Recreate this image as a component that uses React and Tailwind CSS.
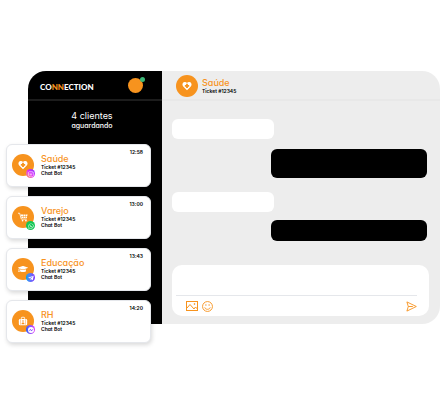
import React from "react";
import clsx from "clsx";
import {
  FaGraduationCap,
  FaInstagram,
  FaTelegramPlane,
  FaWhatsapp,
} from "react-icons/fa";

const HeartIcon = ({ className }) => (
  <svg viewBox="0 0 24 24" className={className}>
    <path
      d="M12 22 3 13.200C-.6 9.400 1 3 6.400 2.400 8.800 2.200 10.800 3.200 12 5c1.200-1.800 3.200-2.800 5.600-2.600C23 3 24.600 9.400 21 13.200L12 22Z"
      fill="currentColor"
    />
    <path
      d="M9.800 6.500h4.400v3h3v4.400h-3v3H9.800v-3h-3V9.500h3z"
      fill="#f7931e"
    />
  </svg>
);

const CartIcon = ({ className }) => (
  <svg viewBox="0 0 24 24" className={className}>
    <path d="M0 3h4l4 14h13" fill="none" stroke="currentColor" strokeWidth="2" />
    <path
      d="M6.500 6H12v3.500H7.500zM13 6h4.500v3.500H13zM18.500 6H23l-.8 3.500h-3.700zM7.800 10.500H12v4H8.900zM13 10.500h4.500v4H13zM18.500 10.500H22l-.8 4h-2.700z"
      fill="currentColor"
    />
    <circle cx="11" cy="20.500" r="2" fill="currentColor" />
    <circle cx="19" cy="20.500" r="2" fill="currentColor" />
  </svg>
);

const BriefcaseIcon = ({ className }) => (
  <svg viewBox="0 0 24 24" className={className}>
    <path
      d="M8 7V4.500A1.500 1.500 0 0 1 9.500 3h5A1.500 1.500 0 0 1 16 4.500V7"
      fill="none"
      stroke="currentColor"
      strokeWidth="2"
    />
    <path
      d="M5 7h14a3 3 0 0 1 3 3v9a3 3 0 0 1-3 3H5a3 3 0 0 1-3-3v-9a3 3 0 0 1 3-3Z"
      fill="currentColor"
    />
    <circle cx="12" cy="12" r="2" fill="#f7931e" />
    <path d="M8.500 19.500c0-3 1.500-4 3.500-4s3.500 1 3.500 4Z" fill="#f7931e" />
    <path d="M6 8v13M18 8v13" stroke="#f7931e" strokeWidth="1" />
  </svg>
);

const MessengerIcon = ({ className }) => (
  <svg viewBox="0 0 24 24" className={className}>
    <circle cx="12" cy="12" r="12" fill="white" />
    <path
      d="m3.500 15 6-6 4.500 4 6.500-4-6 6.500-4.500-4Z"
      fill="#6d3cf5"
      stroke="#6d3cf5"
      strokeWidth="1"
    />
  </svg>
);

const ImageIcon = () => (
  <svg
    viewBox="0 0 24 20"
    className="h-[10px] w-3"
    fill="none"
    stroke="currentColor"
    strokeWidth="2"
  >
    <rect x="1" y="1" width="22" height="18" />
    <path d="m2 14 6-7 8 9 3-4 4 4" />
    <circle cx="17" cy="6" r="1" />
  </svg>
);

const SmileIcon = () => (
  <svg
    viewBox="0 0 24 24"
    className="size-[11px]"
    fill="none"
    stroke="currentColor"
    strokeWidth="2"
  >
    <circle cx="12" cy="12" r="10.800" />
    <path d="M6 14c1.500 5.500 10.500 5.500 12 0" />
    <path d="M8.500 7v3.500M15.500 7v3.500" />
  </svg>
);

const SendIcon = () => (
  <svg
    viewBox="0 0 24 24"
    className="size-[11px]"
    fill="none"
    stroke="currentColor"
    strokeWidth="2"
    strokeLinejoin="round"
  >
    <path d="M2 2 22.500 12 2 22l3-10L2 2Z" />
    <path d="M5 12h10" />
  </svg>
);

const tickets = [
  {
    title: "Saúde",
    time: "12:58",
    icon: HeartIcon,
    channel: FaInstagram,
    color: "bg-linear-to-tr from-orange-400 via-fuchsia-500 to-violet-600",
  },
  {
    title: "Varejo",
    time: "13:00",
    icon: CartIcon,
    channel: FaWhatsapp,
    color: "bg-[#14c656]",
  },
  {
    title: "Educação",
    time: "13:43",
    icon: FaGraduationCap,
    channel: FaTelegramPlane,
    color: "bg-linear-to-r from-sky-500 to-violet-600",
  },
  {
    title: "RH",
    time: "14:20",
    icon: BriefcaseIcon,
    channel: MessengerIcon,
    color: "bg-linear-to-r from-blue-600 to-fuchsia-500",
  },
];

const messages = [
  { mine: false, size: "h-5" },
  { mine: true, size: "mt-[10px] h-[29px]" },
  { mine: false, size: "mt-[14px] h-5" },
  { mine: true, size: "mt-2 h-[21px]" },
];

const Avatar = ({ icon: Icon, children }) => (
  <div className="relative flex size-[22px] shrink-0 items-center justify-center rounded-full bg-[#f7931e] text-white">
    <Icon className="size-[10px]" />
    {children}
  </div>
);

const TicketCard = ({ ticket }) => {
  const Channel = ticket.channel;
  return (
    <li className="flex h-[43px] rounded-md border border-gray-200 bg-white pt-[9px] pr-[7px] pl-[5px] shadow-[1px_2px_4px_rgba(0,0,0,0.15)]">
      <Avatar icon={ticket.icon}>
        <span
          className={clsx(
            "absolute -right-px -bottom-[2px] flex size-[9px] items-center justify-center rounded-full",
            ticket.color
          )}
        >
          <Channel className="size-[6px]" />
        </span>
      </Avatar>
      <div className="ml-[7px] flex-1">
        <h2 className="text-[9px] leading-[10px] font-medium text-[#f7931e]">
          {ticket.title}
        </h2>
        <p className="text-[5px] leading-[6px] font-semibold">
          Ticket #12345
          <br />
          Chat Bot
        </p>
      </div>
      <time className="-mt-[5px] text-[5px] leading-[6px] font-semibold">
        {ticket.time}
      </time>
    </li>
  );
};

const Sidebar = () => (
  <aside className="rounded-tl-[18px] bg-black text-white">
    <header className="flex h-[30px] items-center justify-between border-b-2 border-[#1c1c1c] pr-[19px] pl-3">
      <h1 className="pt-1 font-['Lato',sans-serif] text-[8px] leading-[10px] font-black">
        CO<span className="text-[#f7931e]">NN</span>ECTION
      </h1>
      <div className="relative size-[15px] rounded-full bg-[#f7931e]">
        <span className="absolute -top-px -right-[2px] size-[5px] rounded-full bg-[#3cb878]" />
      </div>
    </header>
    <div className="h-[43px] pt-[10px] pr-[6px] text-center">
      <p className="text-[9px] leading-[10px]">4 clientes</p>
      <p className="text-[7px] leading-[10px] font-medium">aguardando</p>
    </div>
    <ul className="mr-[11px] -mb-[19px] -ml-[22px] flex flex-col gap-[9px] text-black">
      {tickets.map((ticket) => (
        <TicketCard key={ticket.title} ticket={ticket} />
      ))}
    </ul>
  </aside>
);

const Composer = () => (
  <form className="mt-6 mr-[11px] ml-[10px] rounded-[10px] bg-white pr-3 pb-1 pl-1">
    <textarea
      aria-label="Mensagem"
      className="block h-[31px] w-full resize-none border-b border-gray-200 text-[7px] outline-none"
    />
    <div className="flex h-4 items-center gap-1 pt-1 pl-[10px] text-[#f7931e]">
      <button type="button" aria-label="Imagem">
        <ImageIcon />
      </button>
      <button type="button" aria-label="Emoji">
        <SmileIcon />
      </button>
      <button type="submit" aria-label="Enviar" className="ml-auto">
        <SendIcon />
      </button>
    </div>
  </form>
);

const Chat = () => (
  <section className="rounded-r-[18px] bg-[#ededed] pb-2">
    <header className="flex h-[30px] items-center border-b-2 border-[#e8e8e8] pt-px pl-[14px]">
      <Avatar icon={HeartIcon} />
      <div className="ml-1">
        <h2 className="text-[9px] leading-[10px] font-medium text-[#f7931e]">
          Saúde
        </h2>
        <p className="text-[5px] leading-[6px] font-semibold">Ticket #12345</p>
      </div>
    </header>
    <div className="flex flex-col pt-[18px] pr-[13px] pl-[10px]">
      {messages.map((message, i) => (
        <div
          key={i}
          className={clsx(
            "rounded-md",
            message.size,
            message.mine ? "w-[61%] self-end bg-black" : "w-2/5 bg-white"
          )}
        />
      ))}
    </div>
    <Composer />
  </section>
);

export default () => {
  return (
    <main className="min-h-screen bg-white pt-[71px] pl-7 font-['Inter',sans-serif] [font-feature-settings:'cv11']">
      <div className="grid grid-cols-[134px_1fr]">
        <Sidebar />
        <Chat />
      </div>
    </main>
  );
};
